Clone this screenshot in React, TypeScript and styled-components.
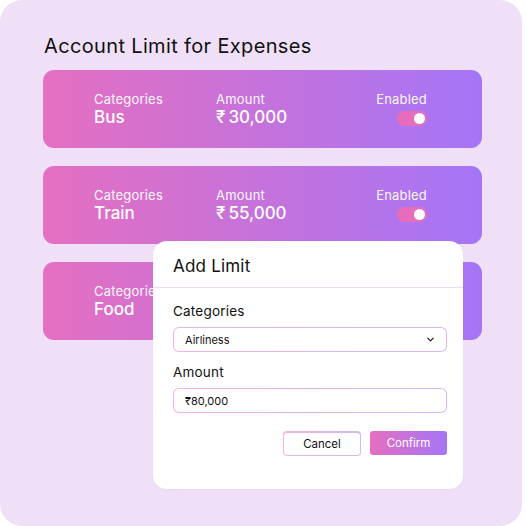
import React, { useState } from 'react';
import styled, { createGlobalStyle } from 'styled-components';

const GlobalStyle = createGlobalStyle`
  html, body {
    margin: 0;
    padding: 0;
    background: #ffffff;
  }
  * { box-sizing: border-box; }
`;

const font = `'Inter', 'Noto Sans', sans-serif`;
const gradient = 'linear-gradient(90deg, #e56fc0 0%, #a575f7 100%)';
const softGradient = 'linear-gradient(90deg, #f2b3e0 0%, #d6b6f8 100%)';

const Panel = styled.div`
  position: relative;
  width: 522px;
  height: 526px;
  background: #efe0f8;
  border-radius: 22px;
  padding: 34px 40px 0 43px;
  font-family: ${font};
`;

const Title = styled.h1`
  margin: 0 0 12px 1px;
  font-size: 20px;
  line-height: 24px;
  font-weight: 400;
  color: #111;
  letter-spacing: 0.35px;
`;

const CardList = styled.div`
  display: flex;
  flex-direction: column;
  gap: 18px;
  width: 439px;
`;

const Card = styled.div`
  height: 78px;
  border-radius: 11px;
  background: ${gradient};
  display: grid;
  grid-template-columns: 122px 1fr auto;
  align-items: start;
  padding: 21px 55px 0 51px;
  color: #fff;
`;

const Field = styled.div<{ $align?: 'right' }>`
  display: flex;
  flex-direction: column;
  align-items: ${p => (p.$align === 'right' ? 'flex-end' : 'flex-start')};
`;

const Label = styled.span`
  font-size: 13px;
  line-height: 16px;
  font-weight: 400;
  letter-spacing: 0.2px;
  opacity: 0.95;
`;

const Value = styled.span`
  font-size: 17px;
  line-height: 20px;
  font-weight: 500;
`;

const Rupee = styled.span`
  margin-right: 3px;
`;

const Toggle = styled.button<{ $on: boolean }>`
  margin-top: 4px;
  width: 30px;
  height: 15px;
  border: none;
  border-radius: 8px;
  padding: 0 2px;
  background: #e66dbb;
  display: flex;
  align-items: center;
  justify-content: ${p => (p.$on ? 'flex-end' : 'flex-start')};
  cursor: pointer;

  &::after {
    content: '';
    width: 11px;
    height: 11px;
    border-radius: 50%;
    background: #fff;
  }
`;

const Modal = styled.div`
  position: absolute;
  left: 153px;
  top: 241px;
  width: 310px;
  height: 248px;
  background: #fff;
  border-radius: 14px;
  box-shadow: 0 1px 4px rgba(150, 90, 200, 0.05);
  color: #111;
`;

const ModalHeader = styled.div`
  height: 47px;
  padding: 14px 20px 0;
  font-size: 17px;
  line-height: 22px;
  letter-spacing: 0.2px;
  border-bottom: 1.5px solid #efd9f6;
`;

const ModalBody = styled.div`
  padding: 14px 16px 0 20px;
  display: flex;
  flex-direction: column;
`;

const FormLabel = styled.div`
  font-size: 13.5px;
  line-height: 18px;
  margin-bottom: 7px;
  letter-spacing: 0.2px;
`;

const GradientBorder = styled.div<{ $radius: number }>`
  padding: 1px;
  border-radius: ${p => p.$radius}px;
  background: ${softGradient};
`;

const InputInner = styled.div`
  height: 23px;
  border-radius: 5px;
  background: #fff;
  display: flex;
  align-items: center;
  justify-content: space-between;
  padding: 0 10px 0 11px;
  font-size: 11px;
  color: #111;
`;

const Spacer = styled.div`
  height: 11px;
`;

const Actions = styled.div`
  display: flex;
  justify-content: flex-end;
  gap: 9px;
  margin-top: 18px;
`;

const CancelInner = styled.button`
  width: 76px;
  height: 22px;
  border: none;
  border-radius: 3px;
  background: #fff;
  font-family: ${font};
  font-size: 11.5px;
  color: #111;
  cursor: pointer;
`;

const ConfirmButton = styled.button`
  width: 77px;
  height: 24px;
  border: none;
  border-radius: 3px;
  background: ${gradient};
  font-family: ${font};
  font-size: 11.5px;
  color: #fff;
  cursor: pointer;
`;

const Chevron = () => (
  <svg width="11" height="11" viewBox="0 0 24 24" fill="none" stroke="#111" strokeWidth="2.4" strokeLinecap="round" strokeLinejoin="round">
    <path d="M6 9l6 6 6-6" />
  </svg>
);

// the last card sits under the Add Limit dialog, only its category shows
const limits = [
  { category: 'Bus', amount: '30,000', covered: false },
  { category: 'Train', amount: '55,000', covered: false },
  { category: 'Food', amount: '20,000', covered: true },
];

export default function App() {
  const [enabled, setEnabled] = useState(limits.map(() => true));

  return (
    <>
      <GlobalStyle />
      <Panel>
        <Title>Account Limit for Expenses</Title>
        <CardList>
          {limits.map((l, i) => (
            <Card key={l.category}>
              <Field>
                <Label>Categories</Label>
                <Value>{l.category}</Value>
              </Field>
              {!l.covered && (
                <>
                  <Field>
                    <Label>Amount</Label>
                    <Value><Rupee>₹</Rupee>{l.amount}</Value>
                  </Field>
                  <Field $align="right">
                    <Label>Enabled</Label>
                    <Toggle
                      $on={enabled[i]}
                      onClick={() => setEnabled(e => e.map((v, j) => (j === i ? !v : v)))}
                    />
                  </Field>
                </>
              )}
            </Card>
          ))}
        </CardList>

        <Modal>
          <ModalHeader>Add Limit</ModalHeader>
          <ModalBody>
            <FormLabel>Categories</FormLabel>
            <GradientBorder $radius={6}>
              <InputInner>
                <span>Airliness</span>
                <Chevron />
              </InputInner>
            </GradientBorder>
            <Spacer />
            <FormLabel>Amount</FormLabel>
            <GradientBorder $radius={6}>
              <InputInner>
                <span>₹80,000</span>
              </InputInner>
            </GradientBorder>
            <Actions>
              <GradientBorder $radius={4}>
                <CancelInner>Cancel</CancelInner>
              </GradientBorder>
              <ConfirmButton>Confirm</ConfirmButton>
            </Actions>
          </ModalBody>
        </Modal>
      </Panel>
    </>
  );
}
